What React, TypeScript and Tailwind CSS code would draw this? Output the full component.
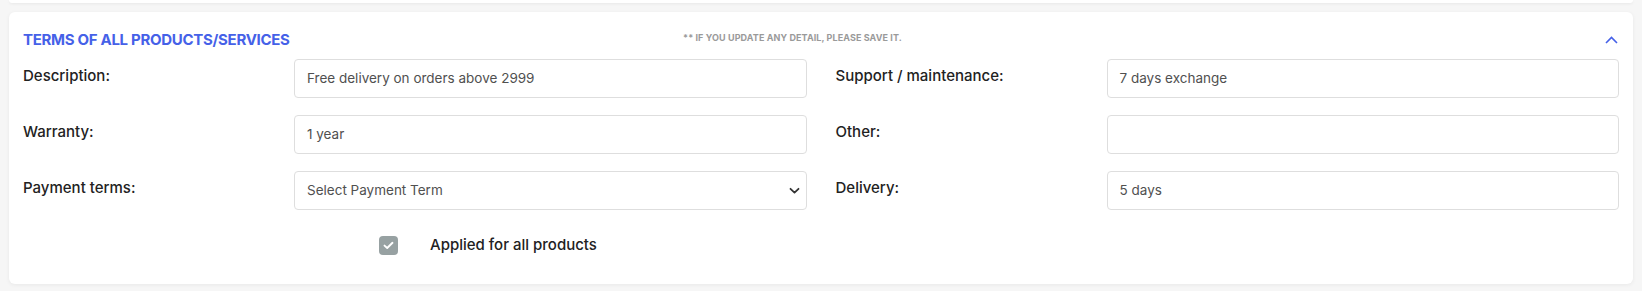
import React from "react";

const font = { fontFamily: "Inter, 'Noto Sans', sans-serif" };

function Field({ label, value, select }: { label: string; value?: string; select?: boolean }) {
  return (
    <div className="flex items-start">
      <div className="w-[271px] pt-[6px] text-[15px] leading-[22px] font-medium text-[#222]">{label}</div>
      <div className="relative flex-1 h-[39px] border border-[#dedede] rounded-[4px] bg-white flex items-center pl-[12px] pr-[12px]">
        <span className="text-[13.5px] text-[#505050]">{value}</span>
        {select && (
          <svg className="absolute right-[6px] top-[15px]" width="11" height="8" viewBox="0 0 11 8" fill="none">
            <path d="M1.5 1.8 L5.5 5.6 L9.5 1.8" stroke="#333" strokeWidth="1.8" strokeLinecap="round" strokeLinejoin="round" />
          </svg>
        )}
      </div>
    </div>
  );
}

export default function App() {
  return (
    <div style={font} className="w-[1642px] h-[291px] bg-[#f6f6f6] overflow-hidden">
      <div className="mx-[9px] h-[3px] bg-white rounded-b-[6px] shadow-[0_1px_3px_rgba(0,0,0,0.06)]" />
      <div className="mt-[9px] mx-[9px] h-[272px] bg-white rounded-[6px] shadow-[0_1px_4px_rgba(0,0,0,0.06)] px-[14px] pt-[17px]">
        <div className="flex items-center h-[22px]">
          <div className="text-[15px] font-bold text-[#4561e8] tracking-[-0.3px] uppercase w-[660px]">Terms of all products/services</div>
          <div className="text-[9px] font-bold text-[#9a9a9a] -mt-[5px] tracking-[0.1px]">** IF YOU UPDATE ANY DETAIL, PLEASE SAVE IT.</div>
          <div className="flex-1" />
          <svg width="13" height="8" viewBox="0 0 13 8" fill="none" className="mr-[1px]">
            <path d="M1 7 L6.5 1.5 L12 7" stroke="#4561e8" strokeWidth="1.6" />
          </svg>
        </div>
        <div className="mt-[8px] grid grid-cols-2 gap-x-[29px] gap-y-[17px]">
          <Field label="Description:" value="Free delivery on orders above 2999" />
          <Field label="Support / maintenance:" value="7 days exchange" />
          <Field label="Warranty:" value="1 year" />
          <Field label="Other:" value="" />
          <Field label="Payment terms:" value="Select Payment Term" select />
          <Field label="Delivery:" value="5 days" />
        </div>
        <div className="mt-[24px] flex items-center ml-[356px]">
          <div className="w-[19px] h-[19px] rounded-[4px] bg-[#97a1a2] flex items-center justify-center">
            <svg width="11" height="9" viewBox="0 0 11 9" fill="none">
              <path d="M1.5 4.6 L4.2 7 L9.5 1.8" stroke="white" strokeWidth="1.9" strokeLinecap="round" strokeLinejoin="round" />
            </svg>
          </div>
          <span className="ml-[32px] text-[15px] font-medium text-[#222]">Applied for all products</span>
        </div>
      </div>
    </div>
  );
}
